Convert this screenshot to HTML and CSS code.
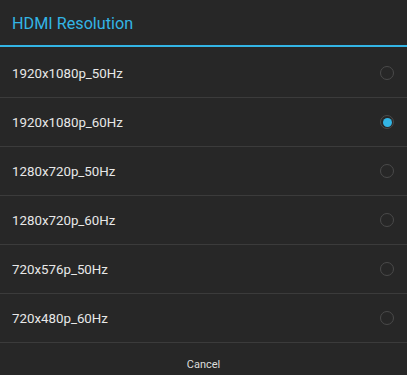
FILE: index.html
```html
<!DOCTYPE html>
<html lang="en">
<head>
    <meta charset="UTF-8">
    <meta name="viewport" content="width=device-width, initial-scale=1.0">
    <title>HDMI Resolution</title>
    <link rel="stylesheet" href="styles.css">
</head>
<body>
    <div class="dialog">
        <!-- Title -->
        <div class="dialog-title">HDMI Resolution</div>

        <!-- Options -->
        <ul class="option-list">
            <li class="option">
                <span>1920x1080p_50Hz</span>
                <span class="radio"></span>
            </li>
            <li class="option">
                <span>1920x1080p_60Hz</span>
                <span class="radio checked"></span>
            </li>
            <li class="option">
                <span>1280x720p_50Hz</span>
                <span class="radio"></span>
            </li>
            <li class="option">
                <span>1280x720p_60Hz</span>
                <span class="radio"></span>
            </li>
            <li class="option">
                <span>720x576p_50Hz</span>
                <span class="radio"></span>
            </li>
            <li class="option">
                <span>720x480p_60Hz</span>
                <span class="radio"></span>
            </li>
        </ul>

        <!-- Button bar -->
        <div class="button-bar">
            <button class="cancel-btn">Cancel</button>
        </div>
    </div>
</body>
</html>
```

FILE: styles.css
```css
* {
    margin: 0;
    padding: 0;
    box-sizing: border-box;
}

body {
    font-family: 'Roboto', 'Liberation Sans', sans-serif;
    background-color: #272727;
    color: #e8e8e8;
    width: 407px;
    height: 375px;
    overflow: hidden;
}

.dialog {
    display: flex;
    flex-direction: column;
    height: 100%;
}

/* Title */
.dialog-title {
    height: 47px;
    padding: 1px 12px 0;
    display: flex;
    align-items: center;
    font-size: 16.2px;
    color: #33b5e5;
    border-bottom: 2px solid #33b5e5;
}

/* Options */
.option-list {
    list-style-type: none;
    padding-top: 2px;
}

.option {
    height: 49px;
    padding: 0 13px 0 12px;
    display: flex;
    align-items: center;
    justify-content: space-between;
    font-size: 13.3px;
    border-bottom: 1px solid #3b3b3b;
}

.radio {
    width: 14px;
    height: 14px;
    border-radius: 50%;
    border: 1.5px solid #4a4a4a;
    display: flex;
    align-items: center;
    justify-content: center;
}

.radio.checked::after {
    content: '';
    width: 9px;
    height: 9px;
    border-radius: 50%;
    background-color: #33b5e5;
}

/* Button bar */
.button-bar {
    flex: 1;
    display: flex;
    justify-content: center;
    align-items: center;
}

.cancel-btn {
    background: none;
    border: none;
    color: #dcdcdc;
    font-family: inherit;
    font-size: 11px;
    padding-top: 10px;
}
```
